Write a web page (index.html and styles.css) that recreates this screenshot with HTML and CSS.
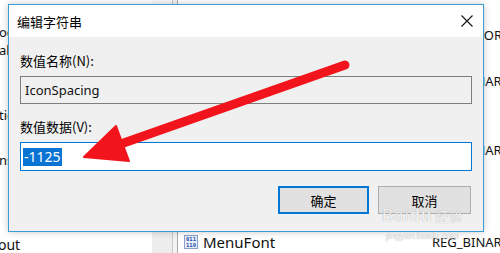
FILE: index.html
```html
<!DOCTYPE html>
<html lang="zh-CN">
<head>
<meta charset="utf-8">
<title>编辑字符串</title>
<link rel="stylesheet" href="styles.css">
</head>
<body>
<div class="screen">
  <div class="tree">
    <div class="tree-list">
      <div class="trow t1">ocess</div>
      <div class="trow t2">al</div>
      <div class="trow t3">tics</div>
      <div class="trow t4">ns</div>
      <div class="trow t5">out</div>
    </div>
    <div class="vscroll"></div>
  </div>
  <div class="splitter"></div>
  <div class="list">
    <div class="lrow"><span class="ico"></span><span class="name">IconFont</span><span class="type">REG_SZ</span></div>
    <div class="lrow"><span class="ico"></span><span class="name">IconTitleWrap</span><span class="type">REG_DWORD</span></div>
    <div class="lrow"><span class="ico"></span><span class="name">IconVerticalSpacing</span><span class="type">REG_SZ</span></div>
    <div class="lrow"><span class="ico"></span><span class="name">IconFont</span><span class="type">REG_BINARY</span></div>
    <div class="lrow"><span class="ico"></span><span class="name">IconSpacing</span><span class="type">REG_SZ</span></div>
    <div class="lrow"><span class="ico"></span><span class="name">IconTitleWrap</span><span class="type">REG_SZ</span></div>
    <div class="lrow"><span class="ico"></span><span class="name">MessageFont</span><span class="type">REG_BINARY</span></div>
    <div class="lrow"><span class="ico"></span><span class="name">MinAnimate</span><span class="type">REG_SZ</span></div>
    <div class="lrow"><span class="ico"></span><span class="name">ScrollHeight</span><span class="type">REG_SZ</span></div>
    <div class="lrow"><span class="ico"></span><span class="name">ScrollWidth</span><span class="type">REG_SZ</span></div>
    <div class="lrow"><span class="ico">
      <svg width="14" height="14" viewBox="0 0 14 14"><rect x="0.5" y="0.5" width="13" height="13" fill="#e8eef8" stroke="#8aa0c8"/><text x="7" y="6" text-anchor="middle" font-size="5.5" font-family="DejaVu Sans Mono" fill="#2a4fb0" font-weight="bold">011</text><text x="7" y="12" text-anchor="middle" font-size="5.5" font-family="DejaVu Sans Mono" fill="#2a4fb0" font-weight="bold">110</text></svg>
    </span><span class="name">MenuFont</span><span class="type">REG_BINARY</span></div>
  </div>

  <div class="dialog">
    <div class="titlebar">
      <span class="title">编辑字符串</span>
      <span class="close">
        <svg width="12" height="12" viewBox="0 0 12 12"><path d="M0.5 0.5 L11.5 11.5 M11.5 0.5 L0.5 11.5" stroke="#1a1a1a" stroke-width="1.2" fill="none"/></svg>
      </span>
    </div>
    <div class="body">
      <div class="label l1">数值名称(N):</div>
      <div class="field readonly">IconSpacing</div>
      <div class="label l2">数值数据(V):</div>
      <div class="field active"><span class="sel">-1125</span></div>
      <div class="buttons">
        <div class="btn default">确定</div>
        <div class="btn">取消</div>
      </div>
    </div>
  </div>

  <svg class="arrow" width="500" height="253" viewBox="0 0 500 253">
    <line x1="345" y1="65" x2="118" y2="145" stroke="#f2141c" stroke-width="9" stroke-linecap="round"/>
    <polygon points="84,157 116,126 129,161" fill="#f2141c" stroke="#f2141c" stroke-width="2" stroke-linejoin="round"/>
  </svg>

  <div class="watermark">
    <div class="wm-logo">Bai<span class="du">du</span><span class="jy">经验</span></div>
    <div class="wm-url">jingyan.baidu.com</div>
  </div>
</div>
</body>
</html>
```
FILE: styles.css
```css
* { box-sizing: border-box; }
html, body { margin: 0; padding: 0; }
body {
  width: 500px;
  height: 253px;
  overflow: hidden;
  background: #fff;
  font-family: "Noto Sans", "Noto Sans CJK SC", sans-serif;
}
.screen {
  position: relative;
  width: 500px;
  height: 253px;
  overflow: hidden;
  display: flex;
  background: #fff;
}
/* background registry editor */
.tree {
  width: 172px;
  flex-shrink: 0;
  display: flex;
  background: #fff;
}
.tree-list {
  flex: 1;
  font-size: 13px;
  color: #111;
  display: flex;
  flex-direction: column;
  overflow: hidden;
}
.trow { height: 18px; line-height: 18px; margin-left: -1px; white-space: nowrap; }
.t1 { margin-top: 23px; }
.t2 { margin-top: 0; }
.t3 { margin-top: 47px; }
.t4 { margin-top: 27px; }
.t5 { margin-top: 67px; margin-left: -2px; font-size: 14px; }
.vscroll {
  width: 20px;
  background: linear-gradient(#f8f8f8, #ededed);
}
.splitter {
  width: 6px;
  flex-shrink: 0;
  border-left: 1px solid #c9c9c9;
  border-right: 1px solid #a9a9a9;
  background: #f3f3f3;
}
.list {
  flex: 1;
  min-width: 0;
  padding-top: 1px;
  display: flex;
  flex-direction: column;
  font-size: 14px;
  color: #111;
}
.lrow {
  height: 23px;
  display: flex;
  align-items: center;
  white-space: nowrap;
  padding-left: 6px;
}
.ico { width: 14px; height: 14px; display: flex; flex-shrink: 0; }
.name { margin-left: 5px; width: 229px; flex-shrink: 0; font-size: 15px; }
.type { font-size: 13px; flex-shrink: 0; }

/* dialog */
.dialog {
  position: absolute;
  left: 8px;
  top: 4px;
  width: 476px;
  height: 228px;
  border: 1px solid #3d9bd3;
  background: #f0f0f0;
  box-shadow: 0 0 7px rgba(0,0,0,0.22);
  display: flex;
  flex-direction: column;
  font-family: "Noto Sans CJK SC", "Noto Sans", sans-serif;
  color: #000;
}
.titlebar {
  height: 32px;
  background: #fff;
  display: flex;
  align-items: center;
  justify-content: space-between;
  padding-left: 8px;
}
.title { font-size: 13px; }
.close {
  width: 32px;
  height: 32px;
  display: flex;
  align-items: center;
  justify-content: center;
}
.body {
  padding: 0 11px 0 11px;
  display: flex;
  flex-direction: column;
}
.label { font-size: 13px; line-height: 18px; height: 18px; }
.l1 { margin-top: 15px; }
.l2 { margin-top: 14px; }
.field {
  margin-top: 6px;
  height: 28px;
  display: flex;
  align-items: center;
  font-family: "Noto Sans", sans-serif;
  font-size: 13px;
}
.readonly {
  border: 1px solid #7e7e7e;
  background: #f0f0f0;
  padding-left: 4px;
  color: #111;
}
.active {
  height: 29px;
  border: 1px solid #0078d7;
  background: #fff;
  padding-left: 2px;
}
.sel {
  background: #0a74d4;
  color: #fff;
  font-size: 14px;
  line-height: 18px;
  padding: 0 1px;
}
.buttons {
  margin-top: 15px;
  display: flex;
  justify-content: flex-end;
  gap: 9px;
  padding-right: 1px;
}
.btn {
  width: 93px;
  height: 28px;
  border: 1px solid #adadad;
  background: #e1e1e1;
  display: flex;
  align-items: center;
  justify-content: center;
  font-size: 13px;
}
.btn.default {
  width: 91px;
  border: 2px solid #0078d7;
}

/* overlay arrow */
.arrow {
  position: absolute;
  left: 0;
  top: 0;
}

/* watermark */
.watermark {
  position: absolute;
  left: 382px;
  top: 206px;
  color: rgba(255,255,255,0.85);
  text-shadow: 0 0 1px rgba(90,90,90,0.55);
  font-family: "Liberation Sans", "Noto Sans CJK SC", sans-serif;
}
.wm-logo { font-size: 17px; line-height: 20px; letter-spacing: 1px; }
.du { font-weight: bold; }
.jy { font-size: 13px; margin-left: 3px; font-family: "Noto Sans CJK SC", sans-serif; }
.wm-url { font-size: 9px; line-height: 12px; margin-left: 4px; margin-top: 4px; }
```
